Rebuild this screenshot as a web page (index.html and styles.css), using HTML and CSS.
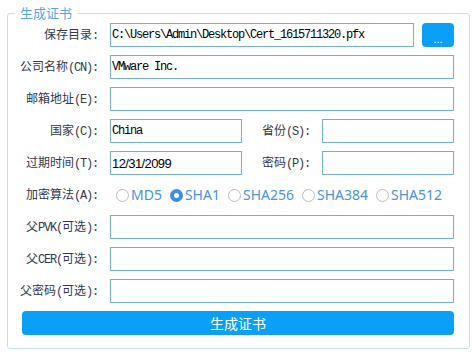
FILE: index.html
```html
<!DOCTYPE html>
<html lang="zh-CN">
<head>
<meta charset="utf-8">
<title>生成证书</title>
<link rel="stylesheet" href="styles.css">
</head>
<body>
<fieldset class="panel">
  <legend class="legend">生成证书</legend>
  <div class="rows">
    <div class="row">
      <label class="lbl">保存目录<span class="lat">:</span></label>
      <input class="inp inp-path" type="text" value="C:\Users\Admin\Desktop\Cert_1615711320.pfx">
      <button class="browse" type="button">...</button>
    </div>
    <div class="row">
      <label class="lbl">公司名称<span class="lat">(CN):</span></label>
      <input class="inp inp-full" type="text" value="VMware Inc.">
    </div>
    <div class="row">
      <label class="lbl">邮箱地址<span class="lat">(E):</span></label>
      <input class="inp inp-full" type="text" value="">
    </div>
    <div class="row">
      <label class="lbl">国家<span class="lat">(C):</span></label>
      <input class="inp inp-half" type="text" value="China">
      <label class="lbl lbl-mid">省份<span class="lat">(S):</span></label>
      <input class="inp inp-half" type="text" value="">
    </div>
    <div class="row">
      <label class="lbl">过期时间<span class="lat">(T):</span></label>
      <input class="inp inp-half inp-date" type="text" value="12/31/2099">
      <label class="lbl lbl-mid">密码<span class="lat">(P):</span></label>
      <input class="inp inp-half" type="text" value="">
    </div>
    <div class="row">
      <label class="lbl">加密算法<span class="lat">(A):</span></label>
      <div class="radios">
        <span class="radio"><span class="dot"></span>MD5</span>
        <span class="radio"><span class="dot on"></span>SHA1</span>
        <span class="radio"><span class="dot"></span>SHA256</span>
        <span class="radio"><span class="dot"></span>SHA384</span>
        <span class="radio"><span class="dot"></span>SHA512</span>
      </div>
    </div>
    <div class="row">
      <label class="lbl">父<span class="lat">PVK(</span>可选<span class="lat">):</span></label>
      <input class="inp inp-full" type="text" value="">
    </div>
    <div class="row">
      <label class="lbl">父<span class="lat">CER(</span>可选<span class="lat">):</span></label>
      <input class="inp inp-full" type="text" value="">
    </div>
    <div class="row">
      <label class="lbl">父密码<span class="lat">(</span>可选<span class="lat">):</span></label>
      <input class="inp inp-full" type="text" value="">
    </div>
    <div class="row">
      <button class="submit" type="button">生成证书</button>
    </div>
  </div>
</fieldset>
</body>
</html>
```
FILE: styles.css
```css
html, body {
  margin: 0;
  padding: 0;
  background: #ffffff;
}
body {
  font-family: "Noto Sans CJK SC", "Noto Sans", sans-serif;
  width: 473px;
  height: 355px;
  overflow: hidden;
}
.panel {
  margin: 4px 3px 0 7px;
  padding: 1px 15px 13px 0;
  border: 1px solid #c9dfeb;
  border-radius: 3px;
  width: 445px;
  box-sizing: content-box;
}
.legend {
  margin-left: 7px;
  padding: 0 5px;
  font-size: 13px;
  line-height: 18px;
  color: #55a9df;
}
.rows {
  display: flex;
  flex-direction: column;
  gap: 8px;
}
.row {
  display: flex;
  align-items: center;
  height: 24px;
}
.lbl {
  width: 90px;
  margin-right: 12px;
  text-align: right;
  font-size: 12px;
  line-height: 24px;
  color: #34364a;
  white-space: nowrap;
}
.lbl-mid {
  width: 68px;
  margin-left: 0;
}
.lat {
  font-family: "Liberation Mono", monospace;
  font-size: 12px;
  letter-spacing: -1.2px;
}
.inp {
  box-sizing: border-box;
  height: 24px;
  margin: 0;
  padding: 0 1px;
  border: 1px solid #6cb2d9;
  border-radius: 0;
  font-family: "Liberation Mono", monospace;
  font-size: 12px;
  letter-spacing: -1.2px;
  color: #000000;
  background: #ffffff;
  outline: none;
}
.inp-full { width: 344px; }
.inp-path { width: 304px; }
.inp-half { width: 132px; }
.inp-date {
  font-family: "Liberation Sans", sans-serif;
  font-size: 13px;
  letter-spacing: -0.6px;
}
.browse {
  margin-left: 8px;
  width: 32px;
  height: 24px;
  padding: 0 0 3px;
  border: none;
  border-radius: 4px;
  background: #0aa0f8;
  color: #ffffff;
  font-family: "Liberation Sans", sans-serif;
  font-size: 11px;
  line-height: 10px;
  display: flex;
  align-items: flex-end;
  justify-content: center;
}
.radios {
  display: flex;
  align-items: center;
  gap: 8px;
  margin-left: 6px;
}
.radio {
  display: flex;
  align-items: center;
  gap: 2px;
  font-family: "Noto Sans", sans-serif;
  font-size: 14px;
  color: #4a93dc;
  line-height: 20px;
}
.dot {
  box-sizing: border-box;
  width: 13px;
  height: 13px;
  border: 1px solid #bdbdbd;
  border-radius: 50%;
  background: #ffffff;
}
.dot.on {
  border: 4px solid #3b8fe6;
}
.submit {
  margin-left: 14px;
  width: 432px;
  height: 24px;
  border: none;
  border-radius: 4px;
  background: #0aa0f8;
  color: #ffffff;
  font-family: "Noto Sans CJK SC", sans-serif;
  font-size: 14px;
  line-height: 24px;
  padding: 0;
}
```
